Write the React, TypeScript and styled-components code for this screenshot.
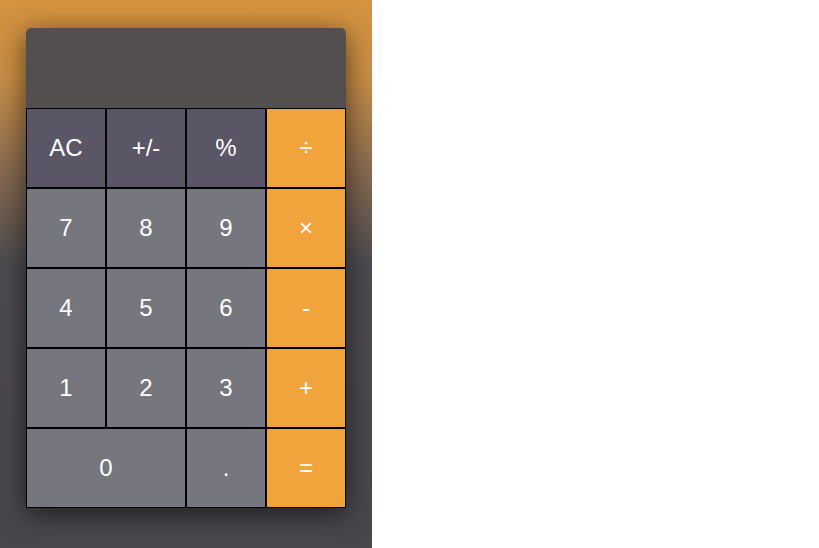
import React from 'react'
import styled, { createGlobalStyle } from 'styled-components'

const GlobalStyle = createGlobalStyle`
  html, body {
    margin: 0;
    padding: 0;
    background: #ffffff;
  }
  body {
    font-family: "Liberation Sans", Arial, sans-serif;
  }
`

const Page = styled.div`
  width: 372px;
  height: 548px;
  box-sizing: border-box;
  padding: 28px 26px;
  background: linear-gradient(
    to bottom,
    #d5933f 0%,
    #c98e45 14%,
    #8d6d50 30%,
    #4d4b50 48%,
    #48474c 100%
  );
`

const Calculator = styled.div`
  width: 320px;
  border-radius: 5px 5px 0 0;
  overflow: hidden;
  box-shadow: 0 6px 28px rgba(0, 0, 0, 0.6);
`

const Display = styled.div`
  height: 80px;
  background: #524f4e;
  color: #ffffff;
`

const Keypad = styled.div`
  display: grid;
  grid-template-columns: repeat(4, 80px);
  grid-auto-rows: 80px;
`

type Kind = 'fn' | 'num' | 'op'

const colors: Record<Kind, string> = {
  fn: '#5a5665',
  num: '#75767e',
  op: '#f1a33c',
}

const Key = styled.button<{ $kind: Kind; $wide?: boolean }>`
  box-sizing: border-box;
  border: 1px solid #000000;
  margin: 0;
  padding: 0;
  background: ${(p) => colors[p.$kind]};
  color: #ffffff;
  font-family: "Liberation Sans", Arial, sans-serif;
  font-size: 24px;
  display: flex;
  align-items: center;
  justify-content: center;
  grid-column: ${(p) => (p.$wide ? 'span 2' : 'auto')};
  cursor: pointer;
`

const KEYS: { label: string; kind: Kind; wide?: boolean }[] = [
  { label: 'AC', kind: 'fn' },
  { label: '+/-', kind: 'fn' },
  { label: '%', kind: 'fn' },
  { label: '÷', kind: 'op' },
  { label: '7', kind: 'num' },
  { label: '8', kind: 'num' },
  { label: '9', kind: 'num' },
  { label: '×', kind: 'op' },
  { label: '4', kind: 'num' },
  { label: '5', kind: 'num' },
  { label: '6', kind: 'num' },
  { label: '-', kind: 'op' },
  { label: '1', kind: 'num' },
  { label: '2', kind: 'num' },
  { label: '3', kind: 'num' },
  { label: '+', kind: 'op' },
  { label: '0', kind: 'num', wide: true },
  { label: '.', kind: 'num' },
  { label: '=', kind: 'op' },
]

export default function App() {
  const [value, setValue] = React.useState('')

  return (
    <>
      <GlobalStyle />
      <Page>
        <Calculator>
          <Display>{value}</Display>
          <Keypad>
            {KEYS.map(({ label, kind, wide }) => (
              <Key
                key={label}
                type="button"
                $kind={kind}
                $wide={wide}
                onClick={() => setValue(label === 'AC' ? '' : value)}
              >
                {label}
              </Key>
            ))}
          </Keypad>
        </Calculator>
      </Page>
    </>
  )
}
